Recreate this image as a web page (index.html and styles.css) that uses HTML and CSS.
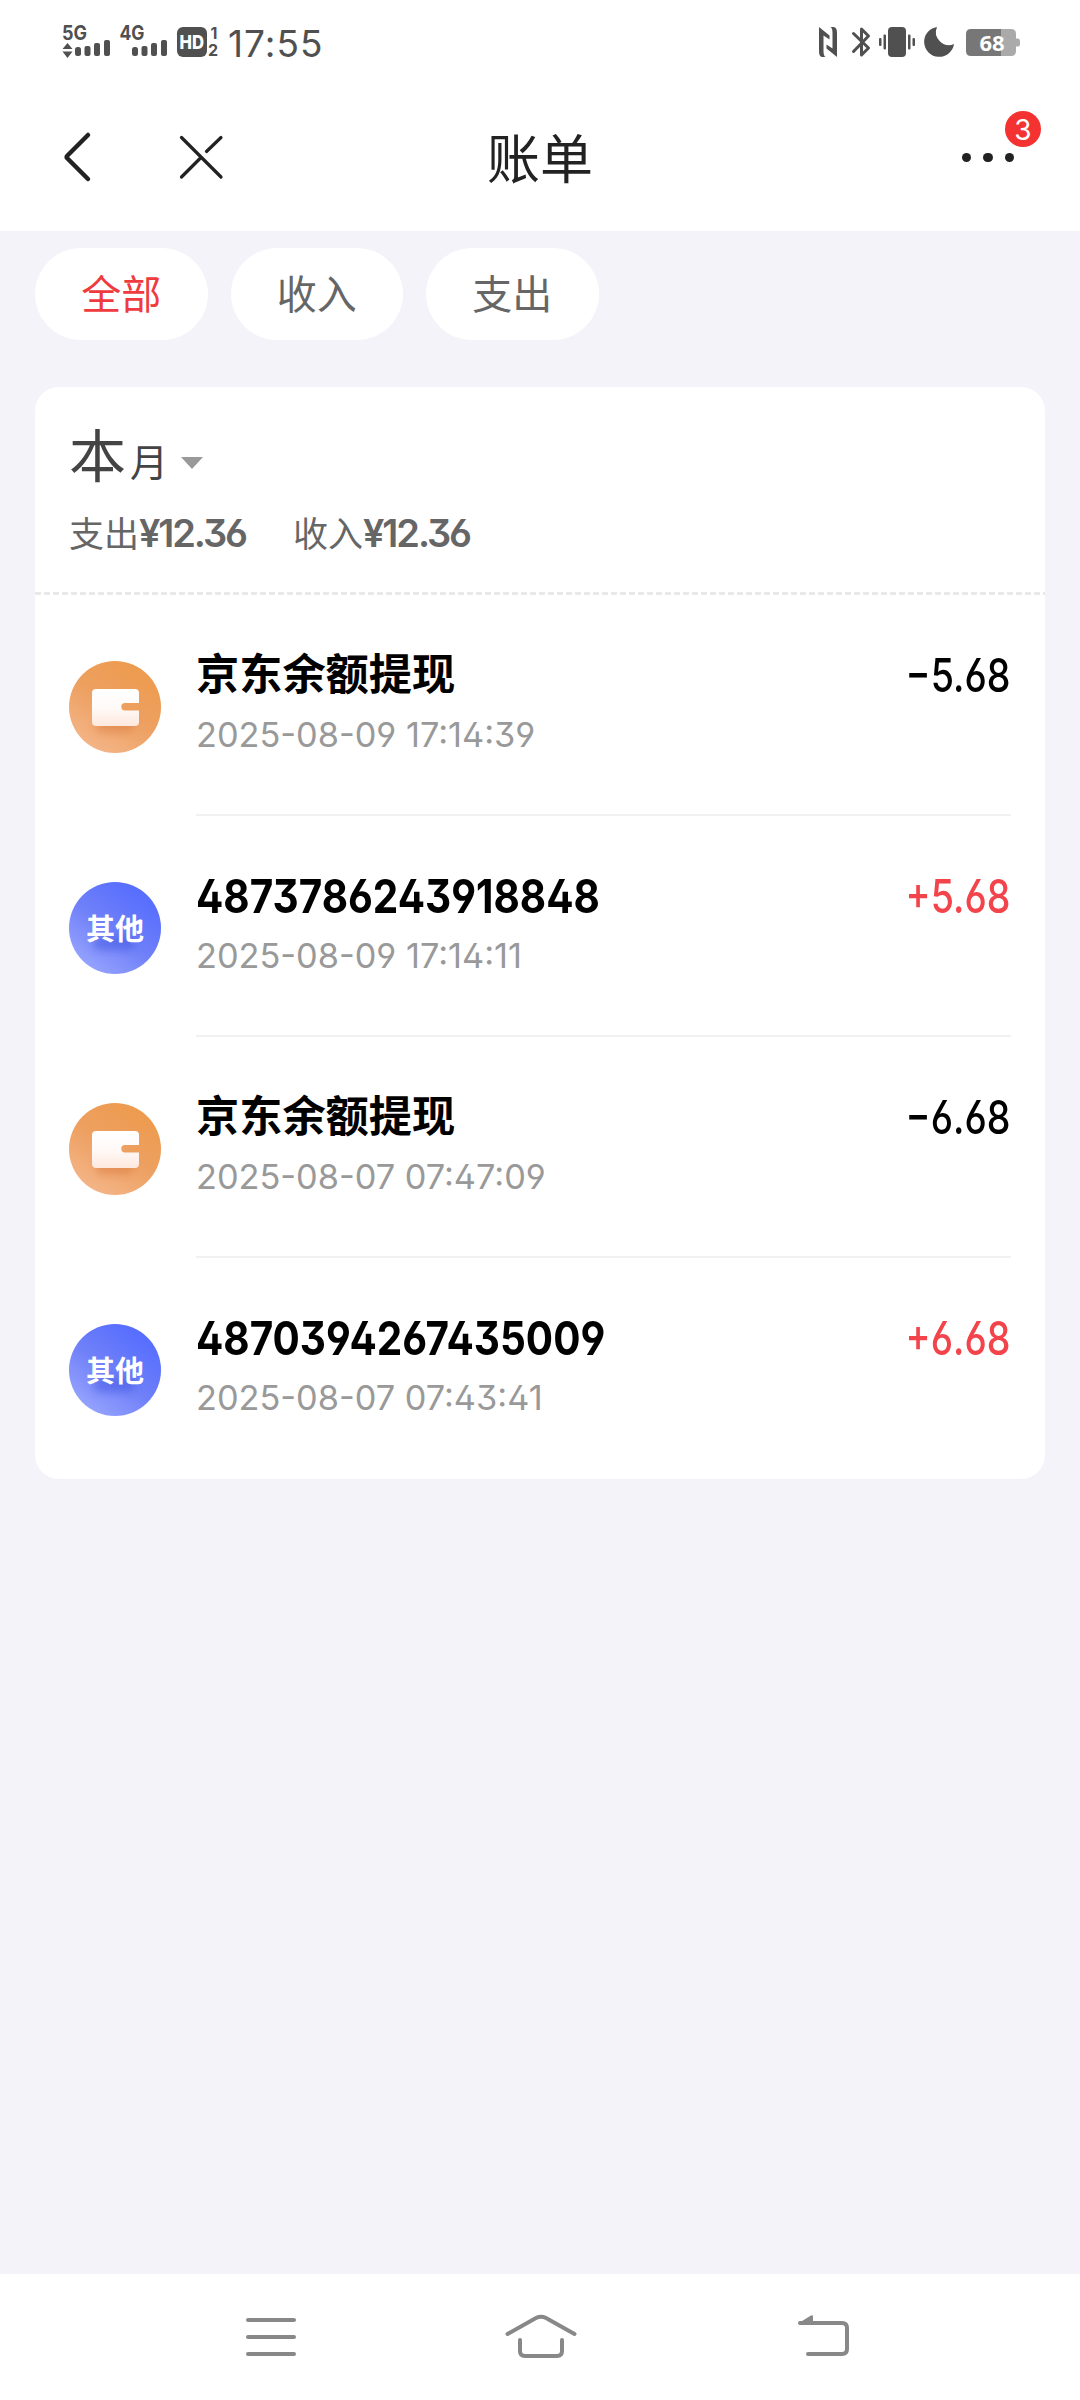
FILE: index.html
```html
<!DOCTYPE html>
<html lang="zh-CN">
<head>
<meta charset="utf-8">
<title>账单</title>
<link rel="stylesheet" href="styles.css">
</head>
<body>
<svg class="defs" width="0" height="0" aria-hidden="true">
  <defs>
    <linearGradient id="orange" x1="0.8" y1="0" x2="0.2" y2="1"><stop offset="0" stop-color="#ed9a4b"/><stop offset="0.5" stop-color="#eda061"/><stop offset="1" stop-color="#f5b78c"/></linearGradient>
    <linearGradient id="blue" x1="0.8" y1="0.1" x2="0.15" y2="0.95"><stop offset="0" stop-color="#566dff"/><stop offset="0.5" stop-color="#6f80f8"/><stop offset="1" stop-color="#99a6ff"/></linearGradient>
    <linearGradient id="paper" x1="0" y1="0" x2="0" y2="1"><stop offset="0" stop-color="#fff"/><stop offset="0.5" stop-color="#fffaf8"/><stop offset="1" stop-color="#fde8dd"/></linearGradient>
    <filter id="soft" x="-50%" y="-50%" width="200%" height="200%"><feGaussianBlur stdDeviation="4"/></filter>
    <symbol id="wallet" viewBox="0 0 92 92">
      <circle cx="46" cy="46" r="46" fill="url(#orange)"/>
      <rect x="27" y="56" width="38" height="15" rx="6" fill="#dc7f45" opacity=".6" filter="url(#soft)"/>
      <path d="M27 28H66Q70 28 70 32V42H56a3.7 3.7 0 0 0 0 7.400H70V61Q70 65 66 65H27Q23 65 23 61V32Q23 28 27 28Z" fill="url(#paper)"/>
    </symbol>
    <symbol id="other" viewBox="0 0 92 92">
      <circle cx="46" cy="46" r="46" fill="url(#blue)"/>
      <rect x="24" y="54" width="42" height="14" rx="7" fill="#4053e0" opacity=".5" filter="url(#soft)"/>
    </symbol>
  </defs>
</svg>
<div class="screen">
  <header class="status">
    <div class="status-left">
      <svg width="160" height="40" viewBox="60 20 160 40" fill="#505050">
        <g class="tag"><text x="62" y="39.500" textLength="25" lengthAdjust="spacingAndGlyphs">5G</text><text x="119.500" y="39.500" textLength="25" lengthAdjust="spacingAndGlyphs">4G</text></g>
        <path d="M67.500 43l5 6h-10zM67.500 58l5-6.500h-10z"/>
        <g id="bars"><rect x="75" y="47" width="6" height="9" rx="2.500"/><rect x="84.500" y="46" width="6" height="10" rx="2"/><rect x="94" y="43" width="6" height="13" rx="2"/><rect x="104" y="40" width="6" height="16" rx="2"/></g>
        <use href="#bars" x="57"/>
        <rect x="177" y="27" width="30" height="30" rx="6"/>
        <g class="hd"><text x="179.500" y="49" textLength="24.500" lengthAdjust="spacingAndGlyphs">HD</text></g>
        <g class="sim"><text x="210.500" y="38.500">1</text><text x="208" y="56">2</text></g>
      </svg>
      <span class="clock">17:55</span>
    </div>
    <svg width="204" height="36" viewBox="818 24 204 36" fill="#505050">
      <path d="M819 27l10.500 8.500v4l-6-4V51q0 5 2 6h-3q-3.500 0-3.500-6zM837 57l-10.500-8.500v-4l6 4V33q0-5-2-6h3q3.500 0 3.500 6z"/>
      <path d="M853.500 33.500l15 14.500-7 7V29l7 7-15 15.500" fill="none" stroke="#505050" stroke-width="3" stroke-linecap="round" stroke-linejoin="round"/>
      <rect x="888" y="27" width="18" height="30" rx="4"/>
      <rect x="883.500" y="34.500" width="2.500" height="15" rx="1"/><rect x="879" y="38" width="2.500" height="8" rx="1"/>
      <rect x="908" y="34.500" width="2.500" height="15" rx="1"/><rect x="912.500" y="38" width="2.500" height="8" rx="1"/>
      <path d="M937 27A13 13 0 0 0 954 44A15 15 0 1 1 937 27Z"/>
      <path d="M971 29H1001V56H971Q966 56 966 51V34Q966 29 971 29Z" fill="#777"/>
      <path d="M1001 29H1011Q1016 29 1016 34V38.500H1018Q1020 38.500 1020 41V44Q1020 46.500 1018 46.500H1016V51Q1016 56 1011 56H1001Z" fill="#aaa"/>
      <text class="charge" x="992" y="50.500" text-anchor="middle">68</text>
    </svg>
  </header>
  <nav class="titlebar">
    <svg class="back" width="34" height="56" viewBox="60 129 34 56"><path d="M88 135L67.500 155.500q-1.500 1.500 0 3L88 179" fill="none" stroke="#222" stroke-width="4.500" stroke-linecap="round"/></svg>
    <svg class="close" width="48" height="56" viewBox="177 129 48 56"><path d="M181.500 137.500l39.500 39.500M181.500 177l19.500-19.500M206.500 151.500l14.500-14" fill="none" stroke="#222" stroke-width="3.200" stroke-linecap="round"/></svg>
    <h1 class="title">账单</h1>
    <div class="more"><i></i><i></i><i></i><b class="badge">3</b></div>
  </nav>
  <div class="filters">
    <button class="chip active">全部</button>
    <button class="chip">收入</button>
    <button class="chip">支出</button>
  </div>
  <main class="card">
    <section class="summary">
      <div class="month"><span class="big">本</span><span class="small">月</span><svg width="22" height="12" viewBox="0 0 22 12"><path d="M0 0h22L11 12z" fill="#999"/></svg></div>
      <div class="totals"><span class="total">支出<b>¥12.36</b></span><span class="total">收入<b>¥12.36</b></span></div>
      <svg class="dash" width="1010" height="3"><path d="M0 1.500H1010" stroke="#e9e9e9" stroke-width="3" stroke-dasharray="6 3"/></svg>
    </section>
    <article class="row">
      <div class="icon"><svg width="92" height="92"><use href="#wallet"/></svg></div>
      <div class="body"><div class="info"><div class="name">京东余额提现</div><time class="date">2025-08-09 17:14:39</time></div><span class="amount">−5.68</span></div>
    </article>
    <article class="row">
      <div class="icon"><svg width="92" height="92"><use href="#other"/></svg><span class="label">其他</span></div>
      <div class="body"><div class="info"><div class="name num">4873786243918848</div><time class="date">2025-08-09 17:14:11</time></div><span class="amount in">+5.68</span></div>
    </article>
    <article class="row">
      <div class="icon"><svg width="92" height="92"><use href="#wallet"/></svg></div>
      <div class="body"><div class="info"><div class="name">京东余额提现</div><time class="date">2025-08-07 07:47:09</time></div><span class="amount">−6.68</span></div>
    </article>
    <article class="row">
      <div class="icon"><svg width="92" height="92"><use href="#other"/></svg><span class="label">其他</span></div>
      <div class="body"><div class="info"><div class="name num">4870394267435009</div><time class="date">2025-08-07 07:43:41</time></div><span class="amount in">+6.68</span></div>
    </article>
  </main>
  <footer class="system">
    <svg width="50" height="50" viewBox="246 2312 50 50"><path d="M248 2320h46M248 2337h46M248 2354h46"/></svg>
    <svg width="74" height="50" viewBox="504 2312 74 50"><path d="M507.500 2334L536 2318q5-2.500 10 0L574.500 2334M520 2340v11q0 5 5 5h32q5 0 5-5v-11"/></svg>
    <svg width="54" height="50" viewBox="797 2312 54 50"><path d="M808 2354h34q5 0 5-5v-21q0-5-5-5H800"/><path class="tip" d="M798 2323.500L811 2315.500q2-1 2 1V2324h-14z"/></svg>
  </footer>
</div>
</body>
</html>
```
FILE: styles.css
```css
* { box-sizing: border-box; }
body { margin: 0; background: #f3f3f9; font-family: Inter, "Noto Sans CJK SC", sans-serif; }
.defs { position: absolute; }
.screen { width: 1080px; height: 2400px; display: flex; flex-direction: column; }

.status { height: 84px; padding: 20px 58px 0 60px; background: #fff; display: flex; justify-content: space-between; align-items: flex-start; }
.status > svg { margin-top: 4px; }
.status-left { display: flex; gap: 8px; }
.clock { font-size: 37px; line-height: 48px; letter-spacing: 1px; color: #505050; }
.tag text { font: 700 20px Inter, sans-serif; }
.hd text { font: 800 19px Inter, sans-serif; fill: #fff; }
.sim text { font: 700 16px Inter, sans-serif; }
.charge { font: 700 22px "Open Sans", sans-serif; fill: #fff; }

.titlebar { height: 147px; padding: 0 64px 0 60px; background: #fff; display: grid; grid-template-columns: 117px 250px 226px 1fr; align-items: center; }
.back, .close { position: relative; top: -1px; }
.title { margin: 4px 0 0; text-align: center; font-size: 53px; line-height: 60px; font-weight: 400; color: #222; }
.more { position: relative; justify-self: end; margin-right: 2px; display: flex; gap: 12px; }
.more i { width: 9.400px; height: 9.400px; border-radius: 50%; background: #222; }
.badge { position: absolute; left: 43px; top: -42px; width: 36px; height: 36px; border-radius: 50%; background: #f43232; color: #fff; font-size: 28px; line-height: 38px; font-weight: 400; text-align: center; }

.filters { padding: 17px 35px 0; display: flex; gap: 23px; }
.chip { width: 172.500px; height: 92px; padding: 0 0 4px; border: 0; border-radius: 46px; background: #fff; font-family: "Noto Sans CJK SC", sans-serif; font-size: 40px; line-height: 60px; color: #666; }
.chip.active { color: #ef3b40; }

.card { margin: 47px 35px 0; height: 1092px; border-radius: 24px; background: #fff; }
.summary { height: 208px; display: flex; flex-direction: column; }
.month { height: 112px; padding: 32px 34px 0; display: flex; align-items: baseline; color: #444; }
.big { font-size: 57px; line-height: 76px; }
.small { margin-left: 4px; font-size: 38px; position: relative; top: -1px; }
.month svg { margin-left: 13px; position: relative; top: -8px; }
.totals { flex: 1; padding: 6px 34px 0; display: flex; gap: 47px; font-size: 35px; line-height: 56px; color: #666; }
.totals b { display: inline-block; width: 107px; font-size: 38px; font-weight: 600; letter-spacing: -2.100px; white-space: nowrap; }

.row { height: 221px; padding-left: 34px; display: flex; }
.icon { position: relative; width: 92px; margin-top: 66px; height: 92px; }
.icon svg { display: block; }
.label { position: absolute; inset: 0; text-align: center; font: 700 29px/91px "Noto Sans CJK SC", sans-serif; color: #fff; }
.body { flex: 1; margin: 0 34px 0 35px; padding-top: 50px; border-bottom: 2px solid #f1f1f1; display: flex; justify-content: space-between; align-items: flex-start; }
.row:last-child .body { border: 0; }
.info { display: flex; flex-direction: column; align-items: flex-start; }
.name { height: 62px; font-size: 43.200px; line-height: 59px; font-weight: 700; color: #000; white-space: nowrap; }
.num { font-size: 46.500px; line-height: 61px; transform: scaleX(.87); transform-origin: left; }
.date { font-size: 34.300px; line-height: 56px; color: #999; white-space: nowrap; }
.amount { font-size: 46.500px; line-height: 61px; font-weight: 500; color: #000; transform: scaleX(.81); transform-origin: right; }
.amount.in { color: #f2444a; }
.num, .date, .amount, .totals b { font-feature-settings: "ss01", "cv03", "cv04"; }

.system { margin-top: auto; height: 126px; padding: 38px 0 0 246px; background: #fff; display: grid; grid-template-columns: 258px 293px 54px; align-items: start; }
.system path { fill: none; stroke: #888; stroke-width: 4; stroke-linecap: round; stroke-linejoin: round; }
.system .tip { fill: #888; stroke: none; }
```
